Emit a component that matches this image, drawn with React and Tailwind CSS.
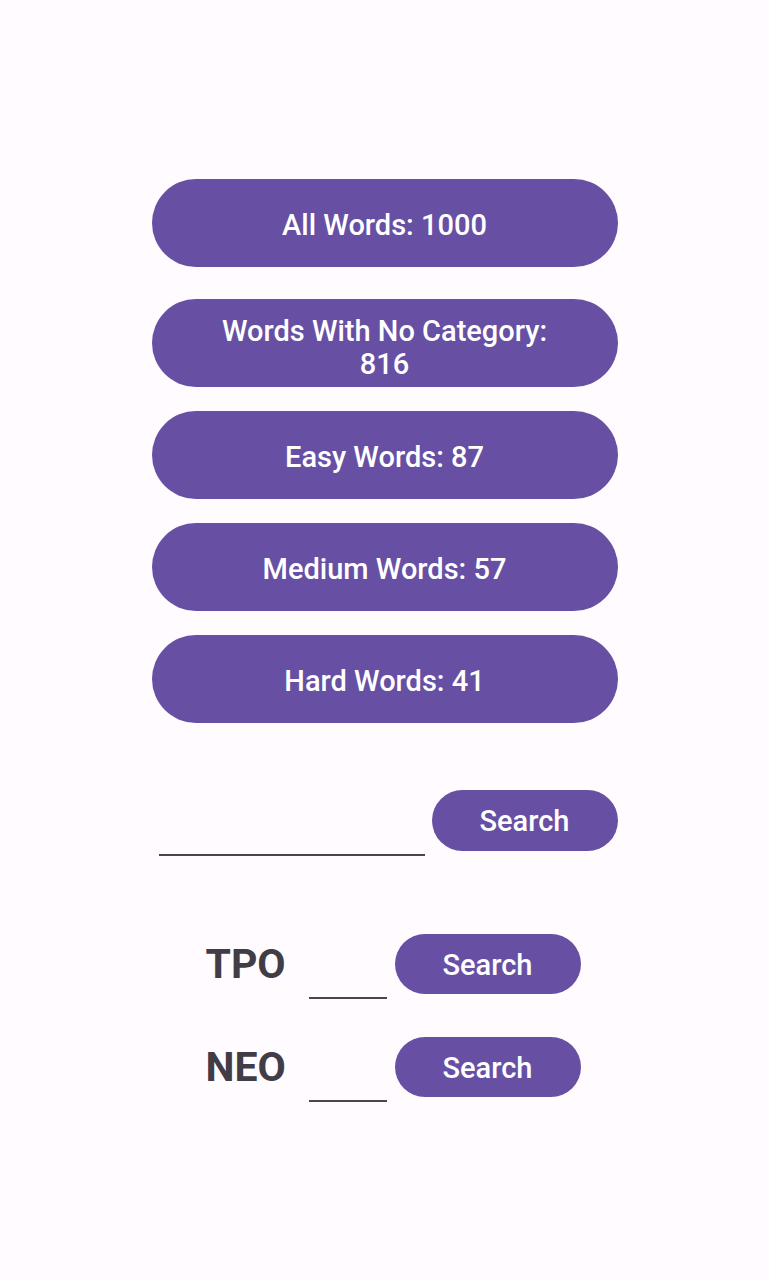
const counts = [
  { label: "All Words: 1000", pad: "pt-[4px]" },
  { label: "Words With No Category: 816", pad: "pt-[10px]" },
  { label: "Easy Words: 87", pad: "pt-[4px]" },
  { label: "Medium Words: 57", pad: "pt-[4px]" },
  { label: "Hard Words: 41", pad: "pt-[4px]" },
]

const CodeRow = ({ name }) => (
  <div className="flex items-start h-[65px]">
    <div className="w-[157px] pl-[54px] pt-[2px] text-[41px] leading-[56px] font-bold text-[#413d47]">
      {name}
    </div>
    <div className="mt-[63px] w-[78px] h-[2px] bg-[#49454f]"></div>
    <button className="ml-[8px] w-[186px] h-[60px] pt-[3px] rounded-full bg-[#6750a4] text-white text-[29px] font-medium">
      Search
    </button>
  </div>
)

const App = () => {
  return (
    <div
      className="min-h-screen bg-[#fffbfe] flex flex-col items-center"
      style={{ fontFamily: "Roboto, 'Noto Sans', sans-serif" }}
    >
      <div className="w-[466px] pt-[179px] flex flex-col">
        {counts.map((c, i) => (
          <button
            key={c.label}
            className={`h-[88px] rounded-full bg-[#6750a4] text-white text-[29px] leading-[33px] font-medium px-[60px] ${c.pad} ${
              i === 0 ? "mb-[32px]" : "mb-[24px]"
            }`}
          >
            {c.label}
          </button>
        ))}

        {/* free text search */}
        <div className="flex items-start mt-[43px] h-[70px]">
          <div className="ml-[7px] mt-[64px] w-[266px] h-[2px] bg-[#49454f]"></div>
          <button className="ml-[7px] w-[186px] h-[61px] pt-[3px] rounded-full bg-[#6750a4] text-white text-[29px] font-medium">
            Search
          </button>
        </div>

        <div className="mt-[74px] flex flex-col gap-[38px]">
          <CodeRow name="TPO" />
          <CodeRow name="NEO" />
        </div>
      </div>
    </div>
  )
}

export default App
